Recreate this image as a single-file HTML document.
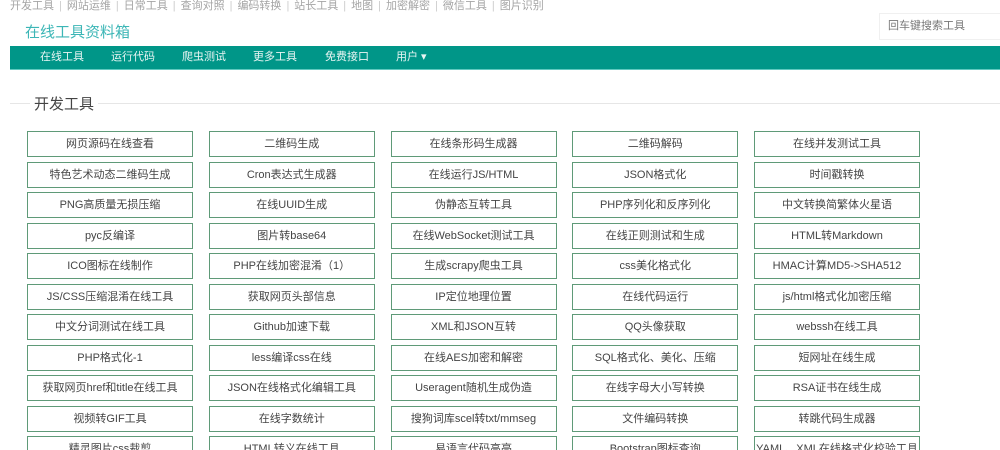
<!DOCTYPE html><html><head><meta charset="utf-8"><style>
html,body{margin:0;width:1000px;height:450px;overflow:hidden;background:#fff;font-family:"Liberation Sans","Noto Sans CJK SC",sans-serif;position:relative}
.top{position:absolute;left:10px;top:0;font-size:11px;color:#a5a5a5;line-height:13px;white-space:nowrap}
.top span{margin:0 5px;color:#ccc}
.logo{position:absolute;left:25px;top:21px;font-size:15px;color:#3cb6b6}
.search{position:absolute;left:879px;top:13px;width:121px;height:27px;border:1px solid #f0f0f0;border-right:none;box-sizing:border-box;font-size:11px;color:#777;line-height:25px;padding-left:8px}
.nav{position:absolute;left:10px;top:46px;width:990px;height:23px;background:#009688;border-bottom:1px solid #5fc9bf}
.nav a{position:absolute;top:0;line-height:23px;font-size:11px;color:#e8f5f3}
.sec{position:absolute;left:10px;top:103px;width:990px;height:1px;background:#e6e6e6}
.st{position:absolute;left:30px;top:93px;padding:0 4px;background:#fff;font-size:15px;color:#444}
.b{position:absolute;width:166px;height:26px;border:1px solid #5f9a78;box-sizing:border-box;text-align:center;font-size:11px;line-height:25px;color:#444;white-space:nowrap;overflow:hidden}
</style></head><body>
<div class="top">开发工具<span>|</span>网站运维<span>|</span>日常工具<span>|</span>查询对照<span>|</span>编码转换<span>|</span>站长工具<span>|</span>地图<span>|</span>加密解密<span>|</span>微信工具<span>|</span>图片识别</div>
<div class="logo">在线工具资料箱</div>
<div class="search">回车键搜索工具</div>
<div class="nav"><a style="left:30px">在线工具</a><a style="left:101px">运行代码</a><a style="left:172px">爬虫测试</a><a style="left:243px">更多工具</a><a style="left:315px">免费接口</a><a style="left:386px">用户 ▾</a></div>
<div class="sec"></div><div class="st">开发工具</div>
<div id="g"></div>
<script>
var t=["网页源码在线查看","二维码生成","在线条形码生成器","二维码解码","在线并发测试工具",
"特色艺术动态二维码生成","Cron表达式生成器","在线运行JS/HTML","JSON格式化","时间戳转换",
"PNG高质量无损压缩","在线UUID生成","伪静态互转工具","PHP序列化和反序列化","中文转换简繁体火星语",
"pyc反编译","图片转base64","在线WebSocket测试工具","在线正则测试和生成","HTML转Markdown",
"ICO图标在线制作","PHP在线加密混淆（1）","生成scrapy爬虫工具","css美化格式化","HMAC计算MD5->SHA512",
"JS/CSS压缩混淆在线工具","获取网页头部信息","IP定位地理位置","在线代码运行","js/html格式化加密压缩",
"中文分词测试在线工具","Github加速下载","XML和JSON互转","QQ头像获取","webssh在线工具",
"PHP格式化-1","less编译css在线","在线AES加密和解密","SQL格式化、美化、压缩","短网址在线生成",
"获取网页href和title在线工具","JSON在线格式化编辑工具","Useragent随机生成伪造","在线字母大小写转换","RSA证书在线生成",
"视频转GIF工具","在线字数统计","搜狗词库scel转txt/mmseg","文件编码转换","转跳代码生成器",
"精灵图片css裁剪","HTML转义在线工具","易语言代码高亮","Bootstrap图标查询","YAML、XML在线格式化校验工具"];
var h="";for(var i=0;i<t.length;i++){var r=Math.floor(i/5),c=i%5;h+='<div class="b" style="left:'+(27+c*181.75)+'px;top:'+(131+r*30.5)+'px">'+t[i]+'</div>';}
document.getElementById("g").innerHTML=h;
</script>
</body></html>
